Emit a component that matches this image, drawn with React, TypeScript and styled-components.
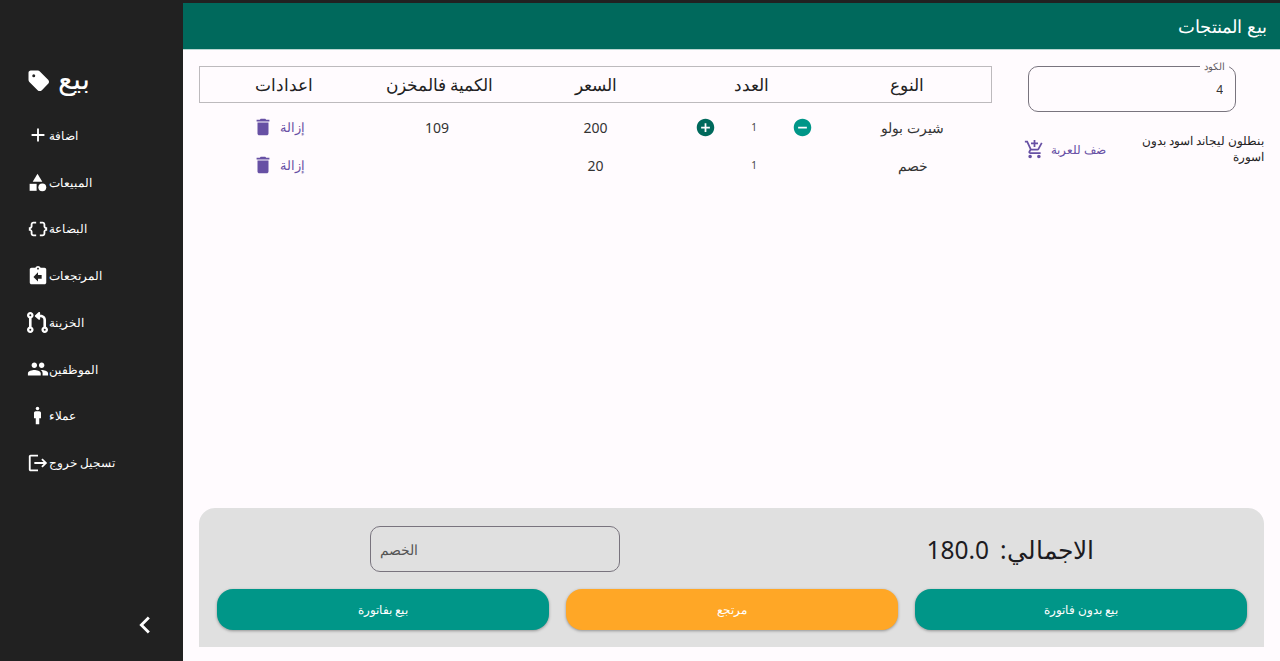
import React from 'react'
import styled, { createGlobalStyle } from 'styled-components'
import { FaTag, FaCodePullRequest } from 'react-icons/fa6'
import {
  MdAdd,
  MdCategory,
  MdDataObject,
  MdAssignmentReturn,
  MdPeople,
  MdMan,
  MdLogout,
  MdChevronLeft,
  MdDelete,
  MdAddCircle,
  MdRemoveCircle,
  MdOutlineAddShoppingCart,
} from 'react-icons/md'

const GlobalStyle = createGlobalStyle`
  html, body {
    margin: 0;
    height: 100%;
    overflow: hidden;
  }
  body {
    font-family: "Noto Sans", "Open Sans", sans-serif;
    background: #212121;
  }
`

const menuItems = [
  { label: 'اضافة', icon: <MdAdd size={22} /> },
  { label: 'المبيعات', icon: <MdCategory size={21} /> },
  { label: 'البضاعة', icon: <MdDataObject size={22} /> },
  { label: 'المرتجعات', icon: <MdAssignmentReturn size={22} /> },
  { label: 'الخزينة', icon: <FaCodePullRequest size={21} /> },
  { label: 'الموظفين', icon: <MdPeople size={22} /> },
  { label: 'عملاء', icon: <MdMan size={21} /> },
  { label: 'تسجيل خروج', icon: <MdLogout size={22} /> },
]

const rows = [
  { name: 'شيرت بولو', count: 1, price: 200, stock: '109', controls: true },
  { name: 'خصم', count: 1, price: 20, stock: '', controls: false },
]

const App: React.FC = () => {
  return (
    <Page>
      <GlobalStyle />
      <Sidebar>
        <Brand>
          <FaTag size={24} />
          <BrandName>بيع</BrandName>
        </Brand>
        <Menu>
          {menuItems.map((item) => (
            <MenuItem key={item.label}>
              <MenuIcon>{item.icon}</MenuIcon>
              <span>{item.label}</span>
            </MenuItem>
          ))}
        </Menu>
        <Collapse>
          <MdChevronLeft size={34} />
        </Collapse>
      </Sidebar>
      <Main>
        <Header>بيع المنتجات</Header>
        <Content>
          <SidePanel>
            <CodeField>
              <CodeLabel>الكود</CodeLabel>
              <CodeInput defaultValue="4" />
            </CodeField>
            <ProductRow>
              <ProductName>بنطلون ليجاند اسود بدون اسورة</ProductName>
              <AddToCart>
                <span>ضف للعربة</span>
                <MdOutlineAddShoppingCart size={21} />
              </AddToCart>
            </ProductRow>
          </SidePanel>
          <TableArea>
            <TableHead>
              <HeadCell>النوع</HeadCell>
              <HeadCell>العدد</HeadCell>
              <HeadCell>السعر</HeadCell>
              <HeadCell>الكمية فالمخزن</HeadCell>
              <HeadCell>اعدادات</HeadCell>
            </TableHead>
            {rows.map((row) => (
              <TableRow key={row.name}>
                <Cell>{row.name}</Cell>
                <CountCell>
                  {row.controls && (
                    <RoundButton $color="#009688">
                      <MdRemoveCircle size={21} />
                    </RoundButton>
                  )}
                  <Count>{row.count}</Count>
                  {row.controls && (
                    <RoundButton $color="#00695c">
                      <MdAddCircle size={21} />
                    </RoundButton>
                  )}
                </CountCell>
                <Cell>{row.price}</Cell>
                <Cell>{row.stock}</Cell>
                <Cell>
                  <RemoveButton>
                    <span>إزالة</span>
                    <MdDelete size={22} />
                  </RemoveButton>
                </Cell>
              </TableRow>
            ))}
          </TableArea>
        </Content>
        <Summary>
          <SummaryTop>
            <Total>
              <span>الاجمالي:</span>
              <span>180.0</span>
            </Total>
            <DiscountSlot>
              <DiscountInput placeholder="الخصم" />
            </DiscountSlot>
          </SummaryTop>
          <Actions>
            <ActionButton $color="#009688">بيع بدون فاتورة</ActionButton>
            <ActionButton $color="#ffa726">مرتجع</ActionButton>
            <ActionButton $color="#009688">بيع بفاتورة</ActionButton>
          </Actions>
        </Summary>
      </Main>
    </Page>
  )
}

export default App

const Page = styled.div`
  display: flex;
  height: 661px;
  padding-top: 3px;
  box-sizing: border-box;
  background: #212121;
`

const Sidebar = styled.aside`
  width: 183px;
  flex-shrink: 0;
  display: flex;
  flex-direction: column;
  color: #fff;
  padding: 0 0 19px 27px;
  box-sizing: border-box;
`

const Brand = styled.div`
  display: flex;
  align-items: center;
  gap: 7px;
  height: 44px;
  margin-top: 56px;
`

const BrandName = styled.span`
  font-size: 29px;
  line-height: 36px;
  margin-top: -6px;
`

const Menu = styled.nav`
  display: flex;
  flex-direction: column;
  margin-top: 9px;
`

const MenuItem = styled.div`
  display: flex;
  align-items: center;
  height: 46.75px;
  font-size: 12px;
`

const MenuIcon = styled.span`
  width: 23px;
  display: flex;
  justify-content: center;
  margin-left: -1px;
`

const Collapse = styled.div`
  margin-top: auto;
  display: flex;
  justify-content: flex-end;
  padding-right: 21px;
`

const Main = styled.main`
  flex: 1;
  min-width: 0;
  display: flex;
  flex-direction: column;
  direction: rtl;
  background: #fffbfe;
`

const Header = styled.header`
  height: 47px;
  flex-shrink: 0;
  display: flex;
  align-items: center;
  padding: 0 13px 1px;
  box-sizing: border-box;
  background: #00695c;
  border-bottom: 1px solid #b9d6d1;
  color: #fff;
  font-size: 18px;
`

const Content = styled.div`
  flex: 1;
  display: flex;
  align-items: flex-start;
  padding: 16px 16px 0;
`

const SidePanel = styled.section`
  width: 244px;
  flex-shrink: 0;
  margin-left: 28px;
`

const CodeField = styled.div`
  position: relative;
  width: 208px;
  height: 46px;
  margin-right: 28px;
  border: 1px solid #79747e;
  border-radius: 10px;
  box-sizing: border-box;
`

const CodeLabel = styled.label`
  position: absolute;
  top: -8px;
  right: 6px;
  padding: 0 4px;
  background: #fffbfe;
  color: #5f5b63;
  font-size: 10px;
  line-height: 14px;
`

const CodeInput = styled.input`
  width: 100%;
  height: 100%;
  padding: 0 12px;
  box-sizing: border-box;
  border: none;
  background: transparent;
  outline: none;
  color: #333;
  font-family: inherit;
  font-size: 12px;
`

const ProductRow = styled.div`
  display: flex;
  align-items: center;
  justify-content: space-between;
  margin-top: 21px;
`

const ProductName = styled.p`
  width: 125px;
  margin: 0;
  color: #222;
  font-size: 12px;
  line-height: 16px;
`

const AddToCart = styled.button`
  display: flex;
  align-items: center;
  gap: 6px;
  margin-left: 4px;
  padding: 0;
  border: none;
  background: none;
  color: #6750a4;
  font-family: inherit;
  font-size: 11.5px;
`

const TableArea = styled.section`
  flex: 1;
  min-width: 0;
`

const TableHead = styled.div`
  display: grid;
  grid-template-columns: repeat(5, 1fr);
  align-items: center;
  height: 37px;
  padding: 0 6px;
  box-sizing: border-box;
  border: 1px solid #bdbabd;
  color: #222;
  font-size: 17px;
  margin-bottom: 5px;
`

const HeadCell = styled.div`
  text-align: center;
`

const TableRow = styled.div`
  display: grid;
  grid-template-columns: repeat(5, 1fr);
  align-items: center;
  height: 38px;
  color: #333;
  font-size: 14px;
`

const Cell = styled.div`
  display: flex;
  justify-content: center;
`

const CountCell = styled(Cell)`
  align-items: center;
  gap: 35px;
`

const Count = styled.span`
  font-size: 10px;
  color: #444;
`

const RoundButton = styled.span<{ $color: string }>`
  display: flex;
  color: ${(p) => p.$color};
`

const RemoveButton = styled.button`
  display: flex;
  align-items: center;
  gap: 6px;
  padding: 0;
  border: none;
  background: none;
  color: #6750a4;
  font-family: inherit;
  font-size: 13px;
`

const Summary = styled.section`
  flex-shrink: 0;
  margin: 0 16px 14px;
  padding: 18px 17px 17px 18px;
  background: #e0e0e0;
  border-radius: 16px 16px 0 0;
`

const SummaryTop = styled.div`
  display: grid;
  grid-template-columns: 474px 1fr;
  align-items: center;
`

const Total = styled.div`
  display: flex;
  justify-content: center;
  gap: 11px;
  color: #1c1b1f;
  font-size: 24.5px;
`

const DiscountSlot = styled.div`
  display: flex;
  justify-content: center;
`

const DiscountInput = styled.input`
  width: 250px;
  height: 46px;
  padding: 0 9px;
  box-sizing: border-box;
  border: 1px solid #79747e;
  border-radius: 10px;
  background: transparent;
  outline: none;
  font-family: inherit;
  font-size: 14px;
  text-align: left;
  &::placeholder {
    color: #555;
  }
`

const Actions = styled.div`
  display: grid;
  grid-template-columns: repeat(3, 332px);
  justify-content: space-between;
  margin-top: 17px;
`

const ActionButton = styled.button<{ $color: string }>`
  height: 41px;
  border: none;
  border-radius: 16px;
  background: ${(p) => p.$color};
  box-shadow: 0 1px 3px rgba(0, 0, 0, 0.35);
  color: #fff;
  font-family: inherit;
  font-size: 12px;
`
